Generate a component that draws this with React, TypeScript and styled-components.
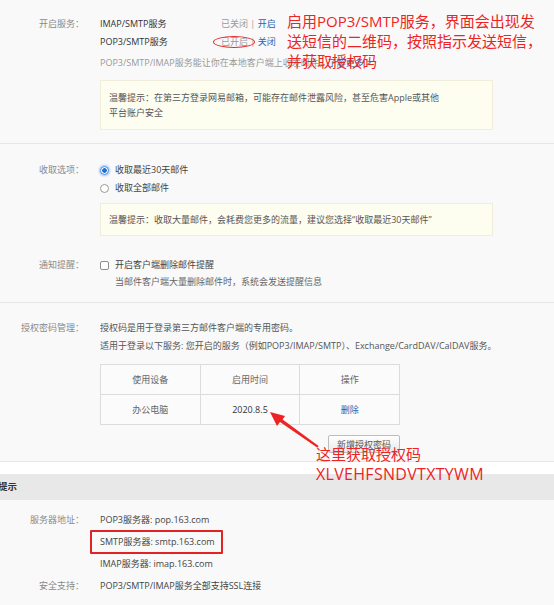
import styled, { createGlobalStyle } from 'styled-components';

const GlobalStyle = createGlobalStyle`
  html, body {
    margin: 0;
    padding: 0;
    background: #f9f9f9;
  }
  body {
    font-family: "Open Sans", "Noto Sans CJK SC", sans-serif;
    font-size: 9px;
    color: #444;
  }
`;

const Page = styled.div`
  position: relative;
  width: 554px;
  height: 605px;
  overflow: hidden;
  background: #f9f9f9;
`;

const Section = styled.div<{ $pt: number; $pb: number }>`
  padding: ${(p) => p.$pt}px 0 ${(p) => p.$pb}px;
  border-bottom: 1px solid #e6e6e6;
`;

const Row = styled.div<{ $mt?: number; $lh?: number }>`
  display: flex;
  align-items: flex-start;
  line-height: ${(p) => p.$lh ?? 18}px;
  margin-top: ${(p) => p.$mt ?? 0}px;
`;

const Label = styled.div`
  width: 84px;
  margin-right: 16px;
  flex-shrink: 0;
  text-align: right;
  color: #8a8a8a;
`;

const Content = styled.div`
  display: flex;
  flex-direction: column;
`;

const ServiceRow = styled.div`
  display: flex;
  color: #333;
`;

const ServiceName = styled.span`
  width: 121px;
`;

const Muted = styled.span`
  color: #999;
`;

const Link = styled.a`
  color: #2d62b0;
  text-decoration: none;
`;

const Circled = styled.span`
  position: relative;
  display: inline-block;
  &::after {
    content: '';
    position: absolute;
    left: -8px;
    right: -7px;
    top: 3px;
    bottom: 3px;
    border: 1.5px solid #e42a2a;
    border-radius: 50%;
  }
`;

const Desc = styled.div<{ $mt?: number; $dark?: boolean }>`
  color: ${(p) => (p.$dark ? '#555' : '#999')};
  margin-top: ${(p) => p.$mt ?? 0}px;
`;

const TipBox = styled.div<{ $mt: number; $pad: number }>`
  width: 375px;
  margin-top: ${(p) => p.$mt}px;
  padding: ${(p) => p.$pad}px 8px;
  background: #fdfdf0;
  border: 1px solid #f0eedb;
  color: #555;
  line-height: 15px;
`;

const Option = styled.label`
  display: flex;
  align-items: center;
  gap: 6px;
  color: #444;
  line-height: 18px;
`;

const Radio = styled.span<{ $on?: boolean }>`
  width: 9px;
  height: 9px;
  border-radius: 50%;
  box-sizing: border-box;
  border: 1px solid ${(p) => (p.$on ? '#3b86e0' : '#9a9a9a')};
  background: ${(p) => (p.$on ? 'radial-gradient(circle, #1f6fd6 0 2px, #ffffff 2.6px)' : '#fff')};
  box-shadow: ${(p) => (p.$on ? '0 0 2px 1px rgba(70, 140, 230, 0.45)' : 'none')};
`;

const Checkbox = styled.span`
  width: 9px;
  height: 9px;
  box-sizing: border-box;
  border: 1px solid #8f8f8f;
  border-radius: 2px;
  background: #fff;
`;

const SubNote = styled.div`
  padding-left: 15px;
  color: #666;
  line-height: 16px;
`;

const Table = styled.table`
  margin-top: 9px;
  width: 300px;
  table-layout: fixed;
  border-collapse: collapse;
  background: #fbfbfb;
  td,
  th {
    border: 1px solid #dcdcdc;
    height: 29px;
    padding: 0;
    text-align: center;
    font-weight: normal;
    color: #666;
  }
`;

const DateCell = styled.td`
  && {
    color: #333;
  }
`;

const ButtonRow = styled.div`
  display: flex;
  justify-content: flex-end;
  width: 300px;
  margin-top: 10px;
`;

const Button = styled.button`
  box-sizing: border-box;
  height: 18px;
  width: 72px;
  padding: 0;
  font-family: inherit;
  font-size: 9px;
  color: #555;
  background: linear-gradient(#ffffff, #e9e9e9);
  border: 1px solid #bdbdbd;
  border-radius: 2px;
`;

const WhiteStrip = styled.div`
  height: 12px;
  background: #fff;
`;

const HeaderBar = styled.div`
  height: 26px;
  line-height: 26px;
  background: #e8e8e8;
  color: #333;
  font-weight: bold;
  font-size: 9.5px;
  text-indent: -2px;
`;

const InfoSection = styled.div`
  padding-top: 9px;
  color: #444;
`;

const Boxed = styled.span`
  position: relative;
  &::after {
    content: '';
    position: absolute;
    left: -10px;
    right: -8px;
    top: -5px;
    bottom: -6px;
    border: 2px solid #e02424;
    border-radius: 1px;
  }
`;

const Note = styled.div<{ $x: number; $y: number }>`
  position: absolute;
  left: ${(p) => p.$x}px;
  top: ${(p) => p.$y}px;
  color: #ee2424;
  font-size: 15px;
  line-height: 20px;
  white-space: nowrap;
  span {
    display: block;
  }
`;

const Code = styled.span`
  font-size: 16px;
  letter-spacing: 0.3px;
`;

const Arrow = styled.svg`
  position: absolute;
  left: 0;
  top: 0;
`;

export default function App() {
  return (
    <Page>
      <GlobalStyle />
      <Section $pt={15} $pb={13}>
        <Row>
          <Label>开启服务：</Label>
          <Content>
            <ServiceRow>
              <ServiceName>IMAP/SMTP服务</ServiceName>
              <span>
                <Muted>已关闭 | </Muted>
                <Link>开启</Link>
              </span>
            </ServiceRow>
            <ServiceRow>
              <ServiceName>POP3/SMTP服务</ServiceName>
              <span>
                <Muted>
                  <Circled>已开启</Circled> |{' '}
                </Muted>
                <Link>关闭</Link>
              </span>
            </ServiceRow>
            <Desc $mt={3}>
              POP3/SMTP/IMAP服务能让你在本地客户端上收发邮件，<Link>了解更多 &gt;</Link>
            </Desc>
            <TipBox $mt={8} $pad={9}>
              温馨提示：在第三方登录网易邮箱，可能存在邮件泄露风险，甚至危害Apple或其他
              <br />
              平台账户安全
            </TipBox>
          </Content>
        </Row>
      </Section>

      <Section $pt={17} $pb={12}>
        <Row>
          <Label>收取选项：</Label>
          <Content>
            <Option>
              <Radio $on />
              收取最近30天邮件
            </Option>
            <Option>
              <Radio />
              收取全部邮件
            </Option>
            <TipBox $mt={6} $pad={8}>
              温馨提示：收取大量邮件，会耗费您更多的流量，建议您选择“收取最近30天邮件”
            </TipBox>
          </Content>
        </Row>
        <Row $mt={20}>
          <Label>通知提醒：</Label>
          <Content>
            <Option>
              <Checkbox />
              开启客户端删除邮件提醒
            </Option>
            <SubNote>当邮件客户端大量删除邮件时，系统会发送提醒信息</SubNote>
          </Content>
        </Row>
      </Section>

      <Section $pt={16} $pb={8}>
        <Row>
          <Label>授权密码管理：</Label>
          <Content>
            <Desc $dark>授权码是用于登录第三方邮件客户端的专用密码。</Desc>
            <Desc $dark>
              适用于登录以下服务: 您开启的服务（例如POP3/IMAP/SMTP）、Exchange/CardDAV/CalDAV服务。
            </Desc>
            <Table>
              <thead>
                <tr>
                  <th>使用设备</th>
                  <th>启用时间</th>
                  <th>操作</th>
                </tr>
              </thead>
              <tbody>
                <tr>
                  <td>办公电脑</td>
                  <DateCell>2020.8.5</DateCell>
                  <td>
                    <Link>删除</Link>
                  </td>
                </tr>
              </tbody>
            </Table>
            <ButtonRow>
              <Button>新增授权密码</Button>
            </ButtonRow>
          </Content>
        </Row>
      </Section>

      <WhiteStrip />
      <HeaderBar>提示</HeaderBar>

      <InfoSection>
        <Row $lh={22}>
          <Label>服务器地址：</Label>
          <Content>
            <div>POP3服务器: pop.163.com</div>
            <div>
              <Boxed>SMTP服务器: smtp.163.com</Boxed>
            </div>
            <div>IMAP服务器: imap.163.com</div>
          </Content>
        </Row>
        <Row $lh={22}>
          <Label>安全支持：</Label>
          <Content>POP3/SMTP/IMAP服务全部支持SSL连接</Content>
        </Row>
      </InfoSection>

      <Note $x={287} $y={11}>
        <span>启用POP3/SMTP服务，界面会出现发</span>
        <span>送短信的二维码，按照指示发送短信，</span>
        <span>并获取授权码</span>
      </Note>

      <Arrow width="554" height="605" viewBox="0 0 554 605">
        <polygon
          points="270,412 285,416 282.6,419.4 318.6,446 317.4,447.8 280,422 277,426"
          fill="#ee2424"
        />
      </Arrow>

      <Note $x={316} $y={444}>
        <span>这里获取授权码</span>
        <Code>XLVEHFSNDVTXTYWM</Code>
      </Note>
    </Page>
  );
}
